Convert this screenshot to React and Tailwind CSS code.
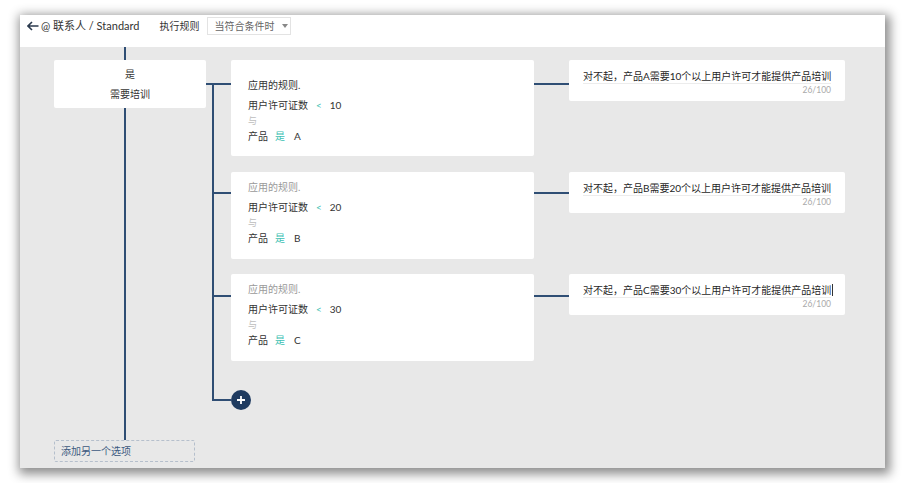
import React from "react";

const rules = [
  {
    id: "a",
    active: true,
    pt: "pt-[15px]",
    gap: "",
    stubTop: "top-[23px]",
    firstStub: true,
    count: "10",
    product: "A",
    msg: "对不起，产品A需要10个以上用户许可才能提供产品培训",
  },
  {
    id: "b",
    active: false,
    pt: "pt-[5px]",
    gap: "mt-[16px]",
    stubTop: "top-[20px]",
    count: "20",
    product: "B",
    msg: "对不起，产品B需要20个以上用户许可才能提供产品培训",
  },
  {
    id: "c",
    active: false,
    pt: "pt-[5px]",
    gap: "mt-[15px]",
    stubTop: "top-[21px]",
    count: "30",
    product: "C",
    msg: "对不起，产品C需要30个以上用户许可才能提供产品培训",
    caret: true,
  },
];

function RuleRow({ r }) {
  return (
    <div className={`flex items-start ${r.gap}`}>
      {/* stub from the trunk */}
      <div className="relative w-[25px] self-stretch shrink-0">
        <div
          className={`absolute h-[2px] bg-[#2f4e74] ${r.stubTop} ${
            r.firstStub ? "left-0 w-[25px]" : "left-[7px] w-[18px]"
          }`}
        />
      </div>

      {/* rule card */}
      <div
        className={`w-[303px] shrink-0 rounded-[2px] bg-white px-[17px] ${r.pt} ${
          r.active ? "pb-[10px]" : "pb-[11px]"
        }`}
      >
        <div
          className={`flex h-[20px] items-center text-[10px] ${
            r.active ? "text-[#333]" : "text-[#9a9a9a]"
          }`}
        >
          应用的规则.
        </div>
        <div className="flex h-[20px] items-center text-[10px] text-[#333]">
          <span>用户许可证数</span>
          <span className="ml-[8px] text-[#3cc0b3]">&lt;</span>
          <span className="ml-[8px]">{r.count}</span>
        </div>
        <div className="flex h-[11px] items-center text-[9px] text-[#bdbdbd]">与</div>
        <div className="flex h-[20px] items-center text-[10px] text-[#333]">
          <span>产品</span>
          <span className="ml-[7px] text-[#3cc0b3]">是</span>
          <span className="ml-[9px]">{r.product}</span>
        </div>
      </div>

      {/* connector to message */}
      <div className="relative w-[35px] self-stretch shrink-0">
        <div className={`absolute left-0 h-[2px] w-[35px] bg-[#2f4e74] ${r.stubTop}`} />
      </div>

      {/* message card */}
      <div className="w-[276px] shrink-0 rounded-[2px] bg-white px-[14px] pt-[9px] pb-[6px]">
        <div className="flex h-[15px] items-center whitespace-nowrap border-b border-[#ececec] text-[10px] text-[#1f1f1f]">
          <span>{r.msg}</span>
          {r.caret && <span className="ml-[1px] h-[12px] w-px shrink-0 bg-[#333]" />}
        </div>
        <div className="mt-[1px] text-right text-[8.5px] leading-[10px] text-[#aaa]">26/100</div>
      </div>
    </div>
  );
}

export default function App() {
  return (
    <div className="h-[483px] w-[905px] bg-white pl-[20px] pt-[15px] font-['Lato','Noto_Sans_CJK_SC',sans-serif]">
      <div className="flex h-[453px] w-[865px] flex-col shadow-[2px_3px_10px_3px_rgba(0,0,0,0.45)]">
        {/* header */}
        <div className="flex h-[32px] shrink-0 items-start bg-white pl-[7px] pt-[2px]">
          <div className="flex h-[18px] items-center">
            <svg width="12" height="10" viewBox="0 0 12 10" className="mr-[2px]">
              <path d="M11.5 5H1.5M5 1L1 5l4 4" fill="none" stroke="#2b3a4e" strokeWidth="1.6" />
            </svg>
            <span className="text-[11px] text-[#333]">@ 联系人 / Standard</span>
            <span className="ml-[20px] text-[10px] text-[#333]">执行规则</span>
          </div>
          <div className="ml-[8px] flex h-[18px] w-[84px] items-center border border-[#e3e3e3] pl-[6px] text-[10px] text-[#666]">
            当符合条件时
            <svg width="6" height="4" viewBox="0 0 6 4" className="ml-[8px]">
              <path d="M0 0h6L3 4z" fill="#888" />
            </svg>
          </div>
        </div>

        {/* canvas */}
        <div className="flex flex-1 overflow-hidden bg-[#e8e8e8] pl-[34px]">
          {/* root column */}
          <div className="flex w-[152px] shrink-0 flex-col">
            <div className="ml-[70px] h-[13px] w-[2px] bg-[#2f4e74]" />
            <div className="flex h-[48px] flex-col items-center justify-center rounded-[2px] bg-white text-[10px] leading-[20px] text-[#333]">
              <span>是</span>
              <span>需要培训</span>
            </div>
            <div className="ml-[70px] h-[332px] w-[2px] bg-[#2f4e74]" />
            <div className="flex h-[22px] w-[141px] items-center rounded-[2px] border border-dashed border-[#b5bfcc] pl-[6px] text-[10px] text-[#3d5a80]">
              添加另一个选项
            </div>
          </div>

          {/* branches */}
          <div className="relative flex flex-col pt-[13px]">
            <div className="absolute left-[6px] top-[36px] h-[318px] w-[2px] bg-[#2f4e74]" />
            {rules.map((r) => (
              <RuleRow key={r.id} r={r} />
            ))}
            <div className="mt-[29px] flex items-center">
              <div className="ml-[7px] h-[2px] w-[18px] bg-[#2f4e74]" />
              <div className="flex h-[20px] w-[20px] items-center justify-center rounded-full bg-[#1f3b60]">
                <svg width="10" height="10" viewBox="0 0 10 10">
                  <path d="M5 1v8M1 5h8" stroke="#fff" strokeWidth="1.8" />
                </svg>
              </div>
            </div>
          </div>
        </div>
      </div>
    </div>
  );
}
